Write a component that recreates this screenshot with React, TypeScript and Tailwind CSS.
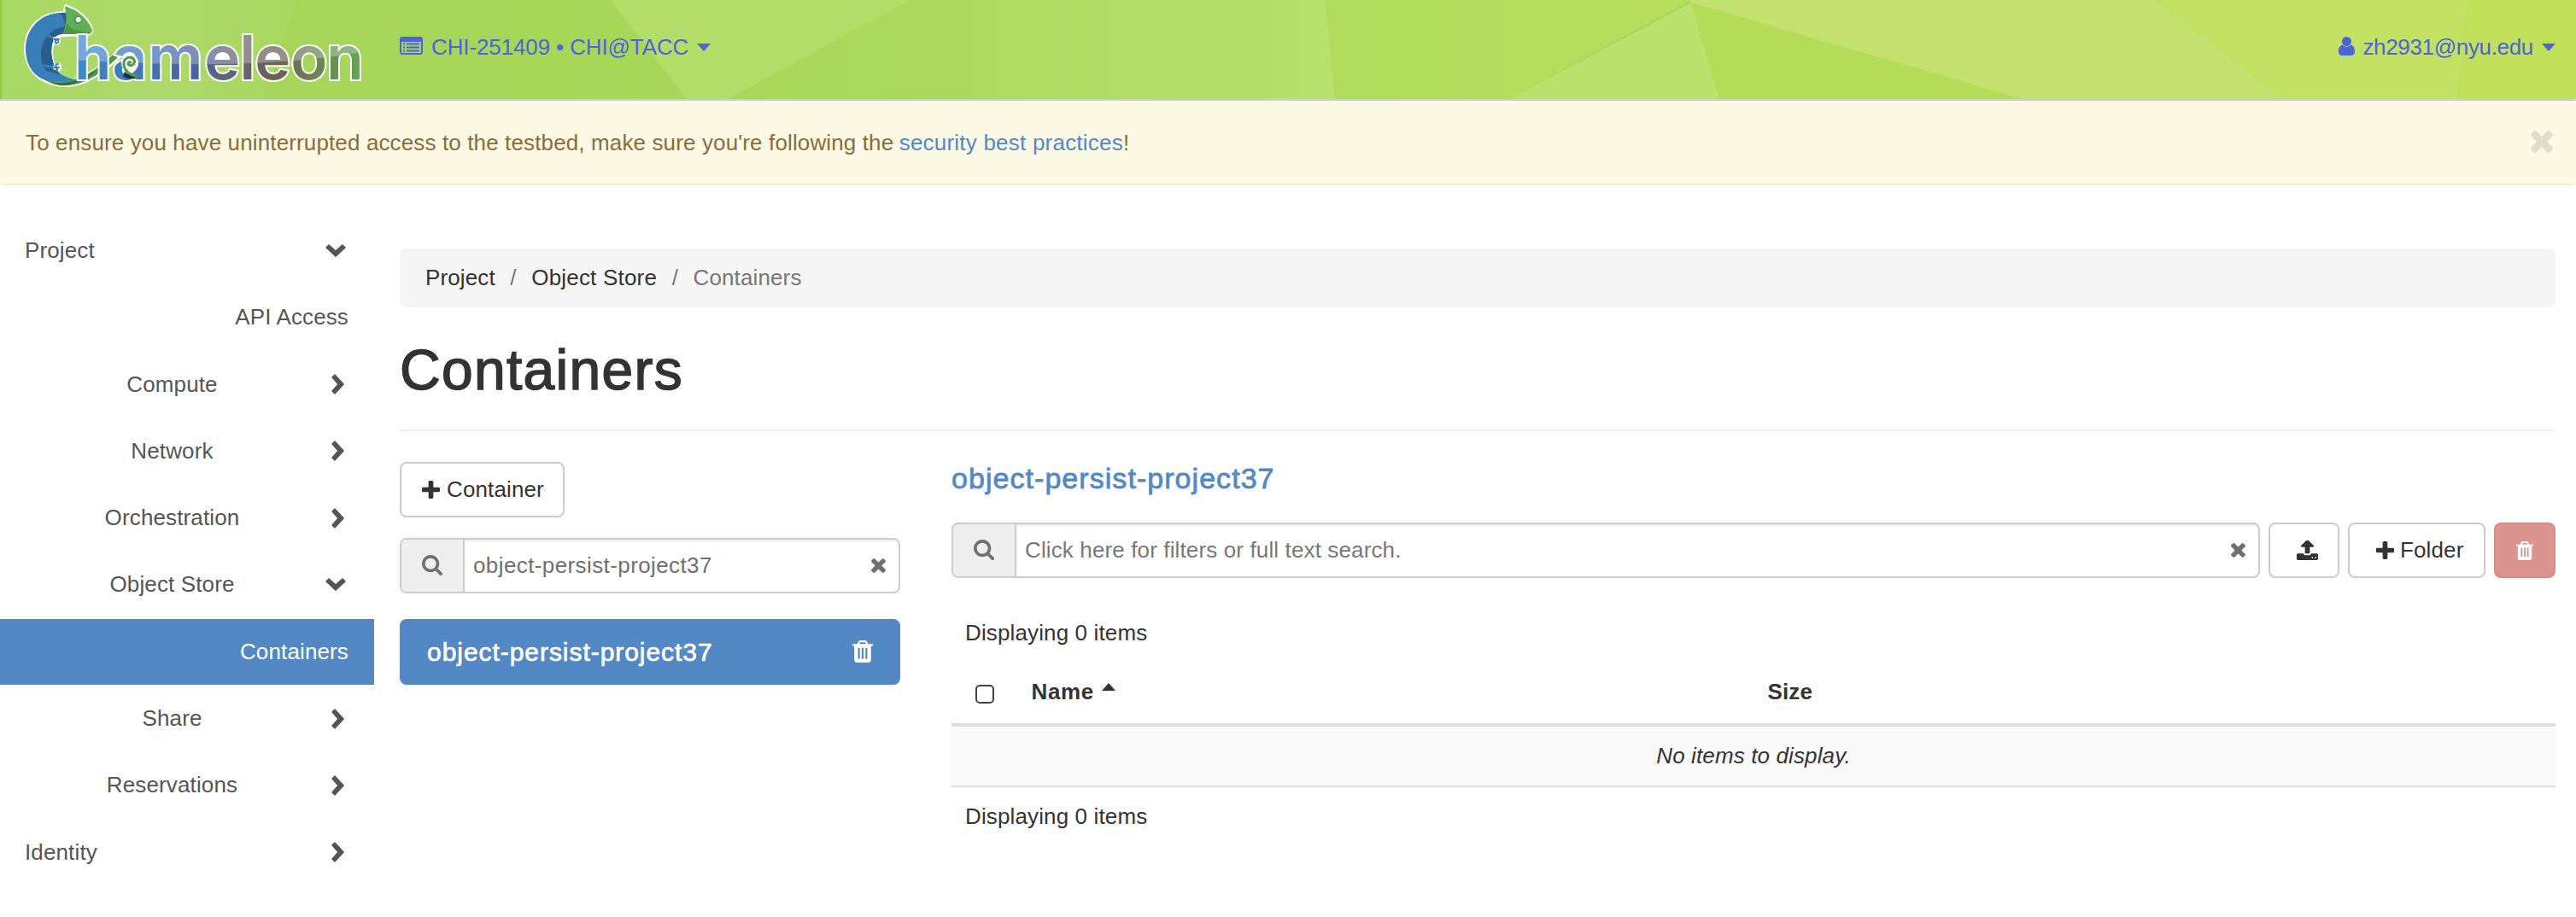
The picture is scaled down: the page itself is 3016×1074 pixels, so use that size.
import type { ReactNode, SVGProps } from "react";

type IconProps = { className?: string };

const Glyph = ({ box, d, className = "" }: { box: string; d: string; className?: string }) => (
  <svg viewBox={box} preserveAspectRatio="none" fill="currentColor" className={`shrink-0 ${className}`}>
    <path d={d} />
  </svg>
);

const TimesIcon = ({ className }: IconProps) => (
  <Glyph
    className={className}
    box="302 366 1188 1188"
    d="M1490 1322q0 40-28 68l-136 136q-28 28-68 28t-68-28l-294-294-294 294q-28 28-68 28t-68-28l-136-136q-28-28-28-68t28-68l294-294-294-294q-28-28-28-68t28-68l136-136q28-28 68-28t68 28l294 294 294-294q28-28 68-28t68 28l136 136q28 28 28 68t-28 68l-294 294 294 294q28 28 28 68z"
  />
);

const PlusIcon = ({ className }: IconProps) => (
  <Glyph
    className={className}
    box="192 128 1408 1408"
    d="M1600 736v192q0 40-28 68t-68 28h-416v416q0 40-28 68t-68 28h-192q-40 0-68-28t-28-68v-416h-416q-40 0-68-28t-28-68v-192q0-40 28-68t68-28h416v-416q0-40 28-68t68-28h192q40 0 68 28t28 68v416h416q40 0 68 28t28 68z"
  />
);

const SearchIcon = ({ className }: IconProps) => (
  <Glyph
    className={className}
    box="64 128 1664 1664"
    d="M1216 832q0-185-131.5-316.5t-316.5-131.5-316.5 131.5-131.5 316.5 131.5 316.5 316.5 131.5 316.5-131.5 131.5-316.5zm512 832q0 52-38 90t-90 38q-54 0-90-38l-343-342q-179 124-399 124-143 0-273.5-55.5t-225-150-150-225-55.5-273.5 55.5-273.5 150-225 225-150 273.5-55.5 273.5 55.5 225 150 150 225 55.5 273.5q0 220-124 399l343 343q37 37 37 90z"
  />
);

const TrashIcon = ({ className }: IconProps) => (
  <Glyph
    className={className}
    box="192 128 1408 1536"
    d="M704 1376v-704q0-14-9-23t-23-9h-64q-14 0-23 9t-9 23v704q0 14 9 23t23 9h64q14 0 23-9t9-23zm256 0v-704q0-14-9-23t-23-9h-64q-14 0-23 9t-9 23v704q0 14 9 23t23 9h64q14 0 23-9t9-23zm256 0v-704q0-14-9-23t-23-9h-64q-14 0-23 9t-9 23v704q0 14 9 23t23 9h64q14 0 23-9t9-23zm-544-992h448l-48-117q-7-9-17-11h-317q-10 2-17 11zm928 32v64q0 14-9 23t-23 9h-96v948q0 83-47 143.500t-113 60.500h-832q-66 0-113-58.500t-47-141.500v-952h-96q-14 0-23-9t-9-23v-64q0-14 9-23t23-9h309l70-167q15-37 54-63t79-26h320q40 0 79 26t54 63l70 167h309q14 0 23 9t9 23z"
  />
);

const UploadIcon = ({ className }: IconProps) => (
  <Glyph
    className={className}
    box="64 130 1664 1536"
    d="M1344 1472q0-26-19-45t-45-19-45 19-19 45 19 45 45 19 45-19 19-45zm256 0q0-26-19-45t-45-19-45 19-19 45 19 45 45 19 45-19 19-45zm128-224v320q0 40-28 68t-68 28h-1472q-40 0-68-28t-28-68v-320q0-40 28-68t68-28h427q21 56 70.500 92t110.500 36h256q61 0 110.500-36t70.500-92h427q40 0 68 28t28 68zm-325-648q-17 40-59 40h-256v448q0 26-19 45t-45 19h-256q-26 0-45-19t-19-45v-448h-256q-42 0-59-40-17-39 14-69l448-448q18-19 45-19t45 19l448 448q31 30 14 69z"
  />
);

const ChevronRight = () => (
  <svg viewBox="0 0 15 24" className="h-6 w-[15px] shrink-0" fill="currentColor" stroke="currentColor" strokeWidth="1.4" strokeLinejoin="round">
    <path d="M4 1 14.200 12 4 23 .9 20.100 8 12 .9 3.900Z" />
  </svg>
);

const ChevronDown = () => (
  <svg viewBox="0 0 24 15" className="h-[15px] w-6 shrink-0" fill="currentColor" stroke="currentColor" strokeWidth="1.4" strokeLinejoin="round">
    <path d="M1 4 12 14.200 23 4 20.100.9 12 8 3.900.9Z" />
  </svg>
);

const ListIcon = () => (
  <svg viewBox="0 0 27 21" className="h-[21px] w-[27px] shrink-0" fill="currentColor">
    <path fillRule="evenodd" d="M3 0h21a3 3 0 0 1 3 3v15a3 3 0 0 1-3 3H3a3 3 0 0 1-3-3V3a3 3 0 0 1 3-3ZM2 6v12.200c0 .5.4.8.8.8h21.400c.5 0 .8-.3.8-.8V6Z" />
    <path d="M4 7.500h2V9.500H4zM8 7.500h15V9.500H8zM4 11.500h2v2H4zM8 11.500h15v2H8zM4 15.500h2v2H4zM8 15.500h15v2H8z" />
  </svg>
);

const UserIcon = () => (
  <svg viewBox="0 0 19 22" className="h-[22px] w-[19px] shrink-0" fill="currentColor">
    <circle cx="9.500" cy="5.500" r="5.500" />
    <path d="M4.500 9.500C1 10.500 0 14 0 17.500 0 20.500 1.800 22 4.200 22h10.600c2.400 0 4.200-1.500 4.200-4.500 0-3.500-1-7-4.500-8A6.800 6.800 0 0 1 4.500 9.500Z" />
  </svg>
);

const Caret = ({ className = "" }: IconProps) => (
  <svg viewBox="0 0 16 9" className={`h-[9px] w-4 shrink-0 ${className}`} fill="currentColor">
    <path d="M0 0h16L8 9z" />
  </svg>
);

const letters: [string, number][] = [
  ["h", 87], ["a", 131.500], ["m", 173.500], ["e", 239.300], ["l", 280.500], ["e", 298.300], ["o", 340.300], ["n", 382.300],
];

const Wordmark = (props: SVGProps<SVGTextElement>) => (
  <text y="93" fontFamily="Inter, sans-serif" fontWeight="600" fontSize="71" x={letters.map((l) => l[1]).join(" ")} {...props}>
    hameleon
  </text>
);

const Logo = () => (
  <svg viewBox="0 0 440 116" className="relative h-[116px] w-[440px] shrink-0">
    <defs>
      <linearGradient id="word" gradientUnits="userSpaceOnUse" x1="88" x2="424" y1="0" y2="0">
        <stop offset="0" stopColor="#3d8cca" />
        <stop offset=".2" stopColor="#4377b8" />
        <stop offset=".4" stopColor="#48659f" />
        <stop offset=".5" stopColor="#5c6580" />
        <stop offset=".6" stopColor="#666666" />
        <stop offset=".7" stopColor="#6d6056" />
        <stop offset=".82" stopColor="#6d7f55" />
        <stop offset="1" stopColor="#63a750" />
      </linearGradient>
      <clipPath id="upper">
        <path d="M80 30H430V60Q300 84 80 70Z" />
      </clipPath>
    </defs>
    {/* white contour behind the animal */}
    <g fill="none" stroke="#fff" strokeWidth="4" strokeLinejoin="round" strokeLinecap="round">
      <path d="M77 7 88 12C97 18 104 25 107 34Q108 39 103 40L75 41C64 42 60 52 60 62C61 80 69 91 83 94Q100 94 133 65L139 67C118 86 104 96 86 99C67 103 50 93 50 93C36 85 30 71 30 57C31 30 49 15 76 15Z" />
    </g>
    <path fill="#51994b" d="M50 92C62 97 78 96 91 92C106 87 119 76 132 64L138 67C122 83 104 96 87 99C72 102 58 98 50 92Z" />
    <path fill="#357437" d="M58 96C73 99 93 96 108 84L113 83C99 94 88 98 79 100Q67 101 58 96Z" />
    <path fill="#397fb7" d="M79 15C49 12 30 33 30 57C30 76 39 88 51 93C63 97 75 96 90 93C75 92 65 84 62 72C59 60 60 49 65 43Q68 40 76 39Z" />
    <path fill="#285f8c" d="M76 31C57 34 48 49 48 63C48 73 51 79 54 83C61 85 67 86 71 88C64 82 61 73 60 62C60 51 63 44 68 41L76 39ZM70 15 79 15 76 30Q75 20 70 15Z" />
    <path fill="none" stroke="#397fb7" strokeWidth="3" strokeLinecap="round" strokeLinejoin="round" d="M58 37 55 41 65 46M52 77 65 79" />
    <g fill="none" stroke="#fff" strokeWidth="6" strokeLinecap="round">
      <path d="M65 46Q70 44 67 50M65 79Q70 74 69 80" />
    </g>
    <path fill="none" stroke="#397fb7" strokeWidth="2" strokeLinecap="round" d="M63 46H69M66 46Q63 48 66 51M67 47Q70 49 67 50M63 79H69M66 79Q64 75 68 75M66 80Q69 82 66 82" />
    <path fill="#5db154" d="M76 7 88 12C97 18 104 25 108 35Q108 40 102 40H74L78 24Z" />
    <path fill="#4e9549" d="M74 40 78 28 81 30Q84 36 105 38L102 40Z" />
    <circle cx="91" cy="23.500" r="4.500" fill="#479445" />
    <circle cx="91.700" cy="23" r="3" fill="#fff" />
    <ellipse cx="260" cy="67" rx="12" ry="6" fill="#fff" />
    <ellipse cx="319" cy="67" rx="12" ry="6" fill="#fff" />
    <Wordmark fill="url(#word)" stroke="#fff" strokeWidth="4" paintOrder="stroke" />
    <Wordmark fill="#fff" fillOpacity=".28" clipPath="url(#upper)" />
    <ellipse cx="152" cy="74" rx="10" ry="11" fill="#fff" />
    <path fill="#1d3044" d="M146 84Q153 90 162 88L158 92Q148 93 144 89Z" />
    <path fill="none" stroke="#51994b" strokeWidth="3" strokeLinecap="round" d="M160 89C151 88 144 81 145 73C146 67 154 65 157 70C159 75 153 79 150 75Q150 72 153 73" />
  </svg>
);

const HeaderArt = () => (
  <svg viewBox="0 0 3016 116" preserveAspectRatio="none" className="absolute inset-0 h-full w-full">
    <defs>
      <linearGradient id="mid" x1="0" x2="1">
        <stop offset="0" stopColor="#a5d656" />
        <stop offset=".45" stopColor="#abd95b" />
        <stop offset="1" stopColor="#b8e06d" />
      </linearGradient>
      <linearGradient id="mid2" x1="0" x2="1">
        <stop offset="0" stopColor="#afdc5a" />
        <stop offset="1" stopColor="#b7dd5c" />
      </linearGradient>
      <linearGradient id="left" x1="0" x2="1">
        <stop offset="0" stopColor="#8dc63f" />
        <stop offset=".01" stopColor="#a8d962" />
        <stop offset=".5" stopColor="#add96a" />
        <stop offset="1" stopColor="#a9d861" />
      </linearGradient>
    </defs>
    <rect width="3016" height="116" fill="#a5d559" />
    <path fill="url(#left)" d="M0 0H347L307 116H0Z" />
    <path fill="url(#mid)" d="M600 0H1552L1563 116H600Z" />
    <path fill="#b2dd68" d="M715 0H1065L852 116H804Z" />
    <path fill="url(#mid2)" d="M1552 0H1980L1767 116H1563Z" />
    <path fill="#bce06c" d="M1980 3 2014 116H1767Z" />
    <path fill="#b5dc57" d="M1980 3 2368 116H2013Z" />
    <path fill="#c3e16c" d="M1978 0H2525L2672 116H2368L1980 3Z" />
    <path fill="#c2e062" d="M2525 0H2890L2877 116H2672Z" />
    <path fill="#c0e05a" d="M2890 0H3016V116H2877Z" />
  </svg>
);

type NavItem = { label: string; level: 0 | 1 | 2; open?: boolean; active?: boolean };

const nav: NavItem[] = [
  { label: "Project", level: 0, open: true },
  { label: "API Access", level: 2 },
  { label: "Compute", level: 1 },
  { label: "Network", level: 1 },
  { label: "Orchestration", level: 1 },
  { label: "Object Store", level: 1, open: true },
  { label: "Containers", level: 2, active: true },
  { label: "Share", level: 1 },
  { label: "Reservations", level: 1 },
  { label: "Identity", level: 0 },
];

const align = { 0: "pl-[29px] text-left", 1: "pl-[31px] text-center", 2: "pl-[30px] text-right" };

const NavRow = ({ label, level, open, active }: NavItem) => (
  <li className={`mb-[1.3px] flex h-[77px] items-center ${active ? "bg-[#5488c5] text-white" : "text-[#555]"}`}>
    <span className={`flex-1 ${align[level]}`}>{label}</span>
    {level === 2 ? (
      <span className="w-[30px]" />
    ) : (
      <span className={`flex w-[66px] justify-end ${open ? "pr-[33px]" : "pr-[35px]"}`}>{open ? <ChevronDown /> : <ChevronRight />}</span>
    )}
  </li>
);

const SearchBox = ({ children }: { children: ReactNode }) => (
  <div className="flex h-[65px] min-w-0 flex-1 overflow-hidden rounded-lg border-2 border-[#ccc] text-[#707070]">
    <div className="flex w-[74px] shrink-0 items-center border-r-2 border-[#ccc] bg-[#eee] pb-0.5 pl-6">
      <SearchIcon className="h-6 w-6" />
    </div>
    <div className="flex flex-1 items-center justify-between pr-[15px] pl-[10px] shadow-[inset_0_2px_2px_rgba(0,0,0,0.075)]">
      {children}
      <TimesIcon className="h-[17px] w-[17px]" />
    </div>
  </div>
);

const Button = ({ children, className = "" }: { children: ReactNode; className?: string }) => (
  <button className={`flex h-[65px] shrink-0 items-center rounded-lg border-2 ${className}`}>{children}</button>
);

export default function App() {
  return (
    <div className="min-h-[1074px] overflow-hidden bg-white font-['Liberation_Sans',Arial,sans-serif] text-[26px] leading-[37px] tracking-[0.13px] text-[#333]">
      <header className="relative flex h-[118px] items-start border-b-2 border-[#ccc] text-[#4d63da]">
        <HeaderArt />
        <Logo />
        <div className="relative flex h-[107px] flex-1 items-center pr-6 pl-7">
          <ListIcon />
          <span className="ml-[10px] pt-1 tracking-[-0.12px]">CHI-251409 • CHI@TACC</span>
          <Caret className="mt-[3px] ml-2.5" />
          <span className="ml-auto flex items-center">
            <UserIcon />
            <span className="ml-[9px] pt-1 tracking-[-0.33px]">zh2931@nyu.edu</span>
            <Caret className="mt-[3px] ml-2.5" />
          </span>
        </div>
      </header>

      <div className="flex h-[99px] items-start justify-between rounded border-b-2 border-[#faebcc] bg-[#fbf8e4] pt-[31px] pr-[27px] pl-[30px] text-[#8a6d3b]">
        <p>
          To ensure you have uninterrupted access to the testbed, make sure you're following the{" "}
          <a className="-ml-px tracking-[0.22px] text-[#5488c5]">security best practices</a>!
        </p>
        <TimesIcon className="mt-[4px] h-[26px] w-[26px] text-[#e3dbc4]" />
      </div>

      <div className="flex">
        <nav className="w-[438px] shrink-0 pt-[38px]">
          <ul>
            {nav.map((item) => (
              <NavRow key={item.label} {...item} />
            ))}
          </ul>
        </nav>

        <main className="min-w-0 flex-1 pt-[74px] pr-6 pl-[30px]">
          <ol className="flex h-[69px] items-center rounded-lg bg-[#f5f5f5] pl-[30px] text-[#333]">
            <li>Project</li>
            <li className="px-[17.500px] text-[#777]">/</li>
            <li className="tracking-[0.2px]">Object Store</li>
            <li className="px-[17.500px] text-[#777]">/</li>
            <li className="text-[#777]">Containers</li>
          </ol>

          <h1 className="mt-[37px] border-b-2 border-[#eee] pb-[34px] text-[66px] leading-[72px] tracking-[1.3px] [-webkit-text-stroke:1.5px_#333]">
            Containers
          </h1>

          <div className="mt-9 flex gap-[60px]">
            <section className="w-[586px] shrink-0">
              <Button className="w-[193px] gap-[8px] border-[#ccc] bg-white pl-6">
                <PlusIcon className="h-[21px] w-[21px]" />
                <span>Container</span>
              </Button>
              <div className="mt-6 flex">
                <SearchBox>
                  <span className="tracking-[0.4px]">object-persist-project37</span>
                </SearchBox>
              </div>
              <div className="mt-[30px] flex h-[77px] items-center justify-between rounded-lg bg-[#5488c5] pr-[32px] pl-[32px] text-white shadow-[0_2px_2px_rgba(0,0,0,0.05)]">
                <span className="text-[30px] tracking-[0.95px] [-webkit-text-stroke:0.7px_#fff]">object-persist-project37</span>
                <TrashIcon className="mb-0.5 h-[26px] w-6" />
              </div>
            </section>

            <section className="min-w-0 flex-1">
              <h4 className="text-[34px] leading-[38px] tracking-[1.05px] text-[#5488c5] [-webkit-text-stroke:0.8px_#5488c5]">
                object-persist-project37
              </h4>

              <div className="mt-[33px] flex gap-2.5">
                <SearchBox>
                  <span className="text-[#777]">Click here for filters or full text search.</span>
                </SearchBox>
                <Button className="w-[83px] border-[#ccc] bg-white pl-[31px]">
                  <UploadIcon className="h-[23px] w-[25px]" />
                </Button>
                <Button className="w-[161px] gap-[7px] border-[#ccc] bg-white pl-[31px]">
                  <PlusIcon className="h-[21px] w-[21px]" />
                  <span>Folder</span>
                </Button>
                <Button className="w-[72px] justify-center border-[#d98a83] bg-[#dc9490] text-white">
                  <TrashIcon className="h-[22px] w-5" />
                </Button>
              </div>

              <div className="mt-[46px]">
                <p className="pl-4">Displaying 0 items</p>
                <div className="flex h-[91px] border-b-4 border-[#ddd] pt-[32px] font-bold">
                  <span className="mt-[10px] ml-[28px] h-[22px] w-[22px] shrink-0 rounded-[5px] border-2 border-[#444]" />
                  <span className="ml-[43.500px] flex w-[862px]">
                    <span className="tracking-[0.6px]">Name</span>
                    <Caret className="mt-[8px] ml-[9px] rotate-180" />
                  </span>
                  <span>Size</span>
                </div>
                <div className="flex h-[71px] items-center justify-center border-b-2 border-[#ddd] bg-[#f9f9f9] italic">
                  <span>No items to display.</span>
                </div>
                <p className="mt-[16px] pl-4">Displaying 0 items</p>
              </div>
            </section>
          </div>
        </main>
      </div>
    </div>
  );
}
